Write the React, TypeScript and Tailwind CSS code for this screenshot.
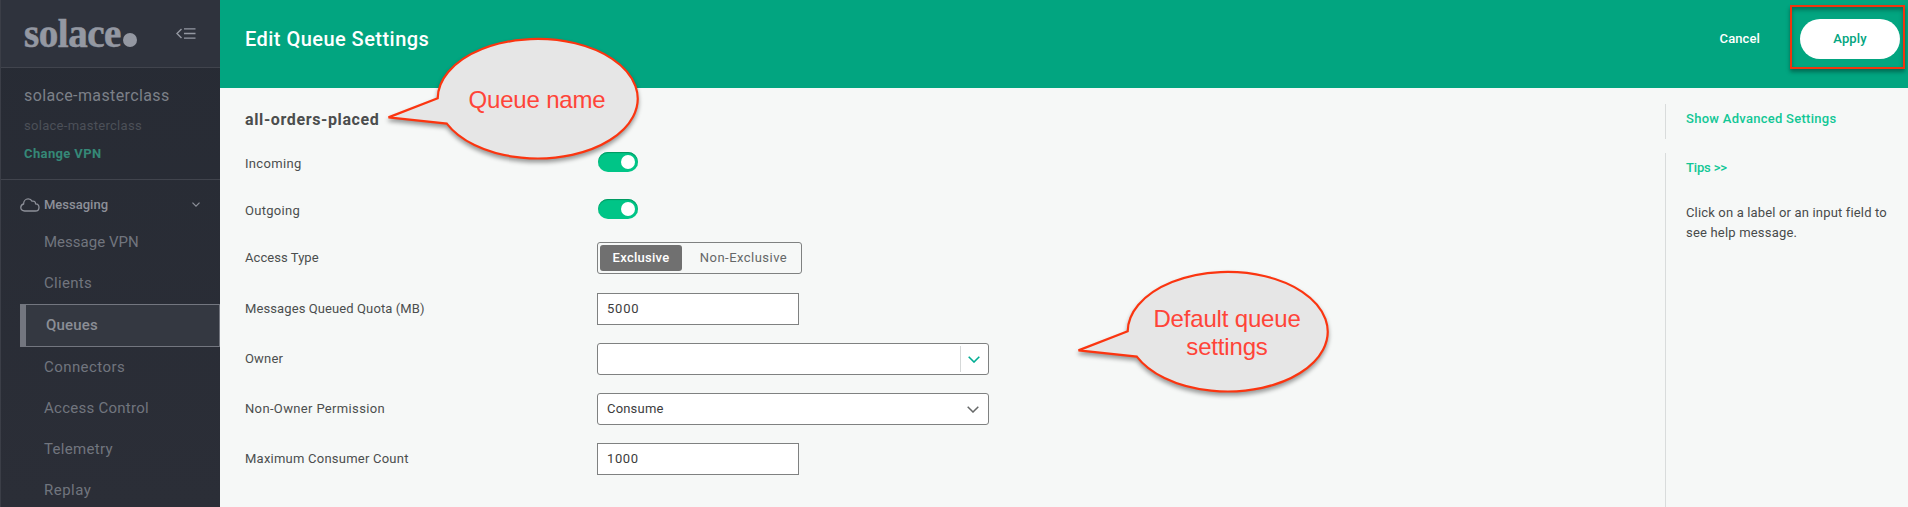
import React from "react";

const FONT = "font-[Roboto,'Liberation_Sans',sans-serif]";

function Logo() {
  return (
    <div className="flex items-end">
      <span className="font-['Liberation_Serif',serif] text-[39px] leading-[39px] font-bold tracking-[-0.45px] text-[#9498a2] [-webkit-text-stroke:0.6px_#9498a2]">
        solace
      </span>
      <span className="mb-[6px] ml-[2px] h-[14px] w-[14px] rounded-full bg-[#9498a2]" />
    </div>
  );
}

function CollapseIcon() {
  return (
    <svg width="20" height="12" viewBox="0 0 20 12" fill="none" stroke="#9498a2" strokeWidth="1.4">
      <path d="M5.5 1 L1 5.5 L5.5 10" />
      <path d="M8 0.8H19.5M8 5.5H19.5M8 10.2H19.5" strokeWidth="1.3" />
    </svg>
  );
}

function CloudIcon() {
  return (
    <svg width="20" height="14" viewBox="0 0 20 14" fill="none" stroke="#8d9099" strokeWidth="1.3" strokeLinejoin="round">
      <path d="M4.6 13C2.4 13 0.8 11.7 0.8 9.6C0.8 7.8 2 6.4 3.6 6C3.6 3 5.6 0.9 8.2 0.9C10.2 0.9 11.4 1.8 12 3.2C14 2.6 15.6 3.8 15.6 5.9C17.6 6 19 7.5 19 9.4C19 11.5 17.5 13 15.3 13Z" />
    </svg>
  );
}

function Chevron({ width, height, stroke, weight }: { width: number; height: number; stroke: string; weight: number }) {
  return (
    <svg width={width} height={height} viewBox="0 0 12 7" fill="none" stroke={stroke} strokeWidth={weight}>
      <path d="M0.7 0.7L6 6L11.3 0.7" />
    </svg>
  );
}

function NavItem({ label, tracking }: { label: string; tracking: string }) {
  return <div className={`flex h-[41px] items-center pl-[43px] text-[15px] text-[#71757e] ${tracking}`}>{label}</div>;
}

function Sidebar() {
  return (
    <aside className="flex w-[220px] shrink-0 flex-col overflow-hidden border-l border-[#3b3e47] bg-linear-to-b from-[#272b34] to-[#2b2e37]">
      <div className="flex h-[68px] shrink-0 items-start justify-between border-b border-[#41444d] bg-[#2f333d] pt-[14px] pr-6 pl-[23px]">
        <Logo />
        <div className="pt-[14px]">
          <CollapseIcon />
        </div>
      </div>
      <div className="flex h-28 shrink-0 flex-col border-b border-[#41444d] pl-[23px]">
        <div className="mt-[18px] text-[16px] leading-5 tracking-[0.38px] text-[#7c8088]">solace-masterclass</div>
        <div className="mt-[10px] text-[13px] leading-5 tracking-[0.29px] text-[#4c5058]">solace-masterclass</div>
        <div className="mt-2 text-[13px] leading-5 font-bold tracking-[0.38px] text-[#358877]">Change VPN</div>
      </div>
      <div className="flex h-[42px] shrink-0 items-center pt-[7px] pr-5 pl-[19px]">
        <CloudIcon />
        <span className="ml-1 text-[13px] font-medium text-[#8d9099]">Messaging</span>
        <span className="ml-auto">
          <Chevron width={8} height={5} stroke="#8d9099" weight={1.8} />
        </span>
      </div>
      <nav className="flex flex-col">
        <NavItem label="Message VPN" tracking="tracking-[0.02px]" />
        <NavItem label="Clients" tracking="tracking-[0.3px]" />
        <div className="ml-[19px] flex h-[43px] items-center border border-l-[6px] border-[#73767f] bg-[#343841] pl-5 text-[15px] font-medium tracking-[0.18px] text-[#8b8e96]">
          Queues
        </div>
        <NavItem label="Connectors" tracking="tracking-[0.43px]" />
        <NavItem label="Access Control" tracking="tracking-[0.26px]" />
        <NavItem label="Telemetry" tracking="tracking-[0.31px]" />
        <NavItem label="Replay" tracking="tracking-[0.5px]" />
      </nav>
    </aside>
  );
}

function Toggle() {
  return (
    <span className="mb-0.5 ml-px flex h-5 w-10 items-center justify-end rounded-full bg-[#00c587] pr-[3px] shadow-[inset_0_1px_1px_#00965f]">
      <span className="h-[14px] w-[14px] rounded-full bg-white" />
    </span>
  );
}

function Row({ label, tracking, children }: { label: string; tracking: string; children: React.ReactNode }) {
  return (
    <div className="flex h-8 items-center">
      <span className={`w-[352px] text-[13px] text-[#4b4e4e] ${tracking}`}>{label}</span>
      {children}
    </div>
  );
}

function Form() {
  return (
    <div className="flex flex-1 flex-col pl-[25px]">
      <h2 className="mt-5 text-[16px] leading-6 font-bold tracking-[0.62px] text-[#4b4d4d]">all-orders-placed</h2>
      <div className="mt-[15px] flex flex-col gap-[15px]">
        <Row label="Incoming" tracking="pt-0.5 tracking-[0.33px]">
          <Toggle />
        </Row>
        <Row label="Outgoing" tracking="pt-0.5 tracking-[0.3px]">
          <Toggle />
        </Row>
      </div>
      <div className="mt-4 mb-[19px]">
        <Row label="Access Type" tracking="tracking-[0.06px]">
          <div className="flex h-8 w-[205px] rounded-[3px] border border-[#7f8181] p-0.5 text-[13px]">
            <span className="flex w-[82px] items-center justify-center rounded-[3px] bg-[#707070] font-medium tracking-[0.26px] text-white">
              Exclusive
            </span>
            <span className="flex flex-1 items-center justify-center pl-1.5 tracking-[0.47px] text-[#656767]">Non-Exclusive</span>
          </div>
        </Row>
      </div>
      <div className="flex flex-col gap-[18px]">
        <Row label="Messages Queued Quota (MB)" tracking="tracking-[0.1px]">
          <div className="flex h-8 w-[202px] items-center border border-[#7f8181] bg-white pl-[9px] text-[13px] tracking-[0.8px] text-[#3c3c3c]">
            5000
          </div>
        </Row>
        <Row label="Owner" tracking="tracking-[0.18px]">
          <div className="flex h-8 w-[392px] items-center rounded-[3px] border border-[#7f8181] bg-white">
            <span className="ml-auto flex h-[26px] w-[28px] items-center justify-center border-l border-[#d5d8d8] pr-px">
              <Chevron width={12} height={7} stroke="#00ad93" weight={1.6} />
            </span>
          </div>
        </Row>
        <Row label="Non-Owner Permission" tracking="tracking-[0.35px]">
          <div className="flex h-8 w-[392px] items-center justify-between rounded-[3px] border border-[#7f8181] bg-white px-[9px] text-[13px] tracking-[0.19px] text-[#3c3c3c]">
            Consume
            <Chevron width={12} height={7} stroke="#666868" weight={1.5} />
          </div>
        </Row>
        <Row label="Maximum Consumer Count" tracking="tracking-[0.23px]">
          <div className="flex h-8 w-[202px] items-center border border-[#7f8181] bg-white pl-[9px] text-[13px] tracking-[0.6px] text-[#3c3c3c]">
            1000
          </div>
        </Row>
      </div>
    </div>
  );
}

function HelpPanel() {
  return (
    <div className="flex w-[243px] shrink-0 flex-col pt-4 text-[13px]">
      <div className="flex h-[35px] items-center border-l border-[#d9dcdc] pl-5 font-medium tracking-[0.28px] text-[#11c795]">
        <span className="mb-1.5">Show Advanced Settings</span>
      </div>
      <div className="mt-[14px] flex-1 border-l border-[#d9dcdc] pt-[5px] pl-5">
        <div className="leading-5 font-medium tracking-[-0.15px] text-[#11c795]">Tips &gt;&gt;</div>
        <p className="mt-[25px] leading-5 text-[#484b4b]">
          <span className="tracking-[0.16px]">Click on a label or an input field to</span>
          <br />
          <span className="tracking-[0.19px]">see help message.</span>
        </p>
      </div>
    </div>
  );
}

function Callout({ place, children }: { place: string; children: React.ReactNode }) {
  return (
    <div className={`absolute ${place}`}>
      <svg width="270" height="136" viewBox="0 0 270 136" className="overflow-visible drop-shadow-[0_3px_2px_rgba(0,0,0,0.38)]">
        <path d="M8.5 86.4L57.7 67.3A100 59.8 0 1 1 66.8 92.6Z" fill="#e6e6e6" stroke="#fb3510" strokeWidth="2.2" />
      </svg>
      <div className="absolute top-[8px] left-[57px] flex h-[121px] w-[200px] items-center justify-center text-center font-['Liberation_Sans',Arial,sans-serif] text-[24px] leading-7 tracking-[-0.18px] text-[#ff4438]">
        {children}
      </div>
    </div>
  );
}

export default function App() {
  return (
    <div className={`relative flex h-[507px] w-full overflow-hidden bg-[#f6f8f7] ${FONT}`}>
      <Sidebar />
      <main className="flex min-w-0 flex-1 flex-col">
        <header className="flex h-[88px] shrink-0 items-start bg-[#02a580] pt-[19px] pr-2 pl-[25px] text-[13px]">
          <h1 className="flex h-10 items-center text-[20px] font-medium tracking-[0.46px] text-white">Edit Queue Settings</h1>
          <span className="mr-10 ml-auto flex h-10 items-center font-medium tracking-[0.1px] text-white">Cancel</span>
          <button className="h-10 w-[100px] rounded-full bg-white font-medium tracking-[0.14px] text-[#02a580]">Apply</button>
        </header>
        <div className="flex min-h-0 flex-1">
          <Form />
          <HelpPanel />
        </div>
      </main>
      <div className="absolute top-[5px] left-[1790px] h-16 w-[115px] border-2 border-[#f0350f] shadow-[0_3px_4px_rgba(0,0,0,0.35),inset_0_3px_4px_rgba(0,0,0,0.3)]" />
      <Callout place="top-[31px] left-[380px]">Queue name</Callout>
      <Callout place="top-[264px] left-[1070px]">
        Default queue
        <br />
        settings
      </Callout>
    </div>
  );
}
